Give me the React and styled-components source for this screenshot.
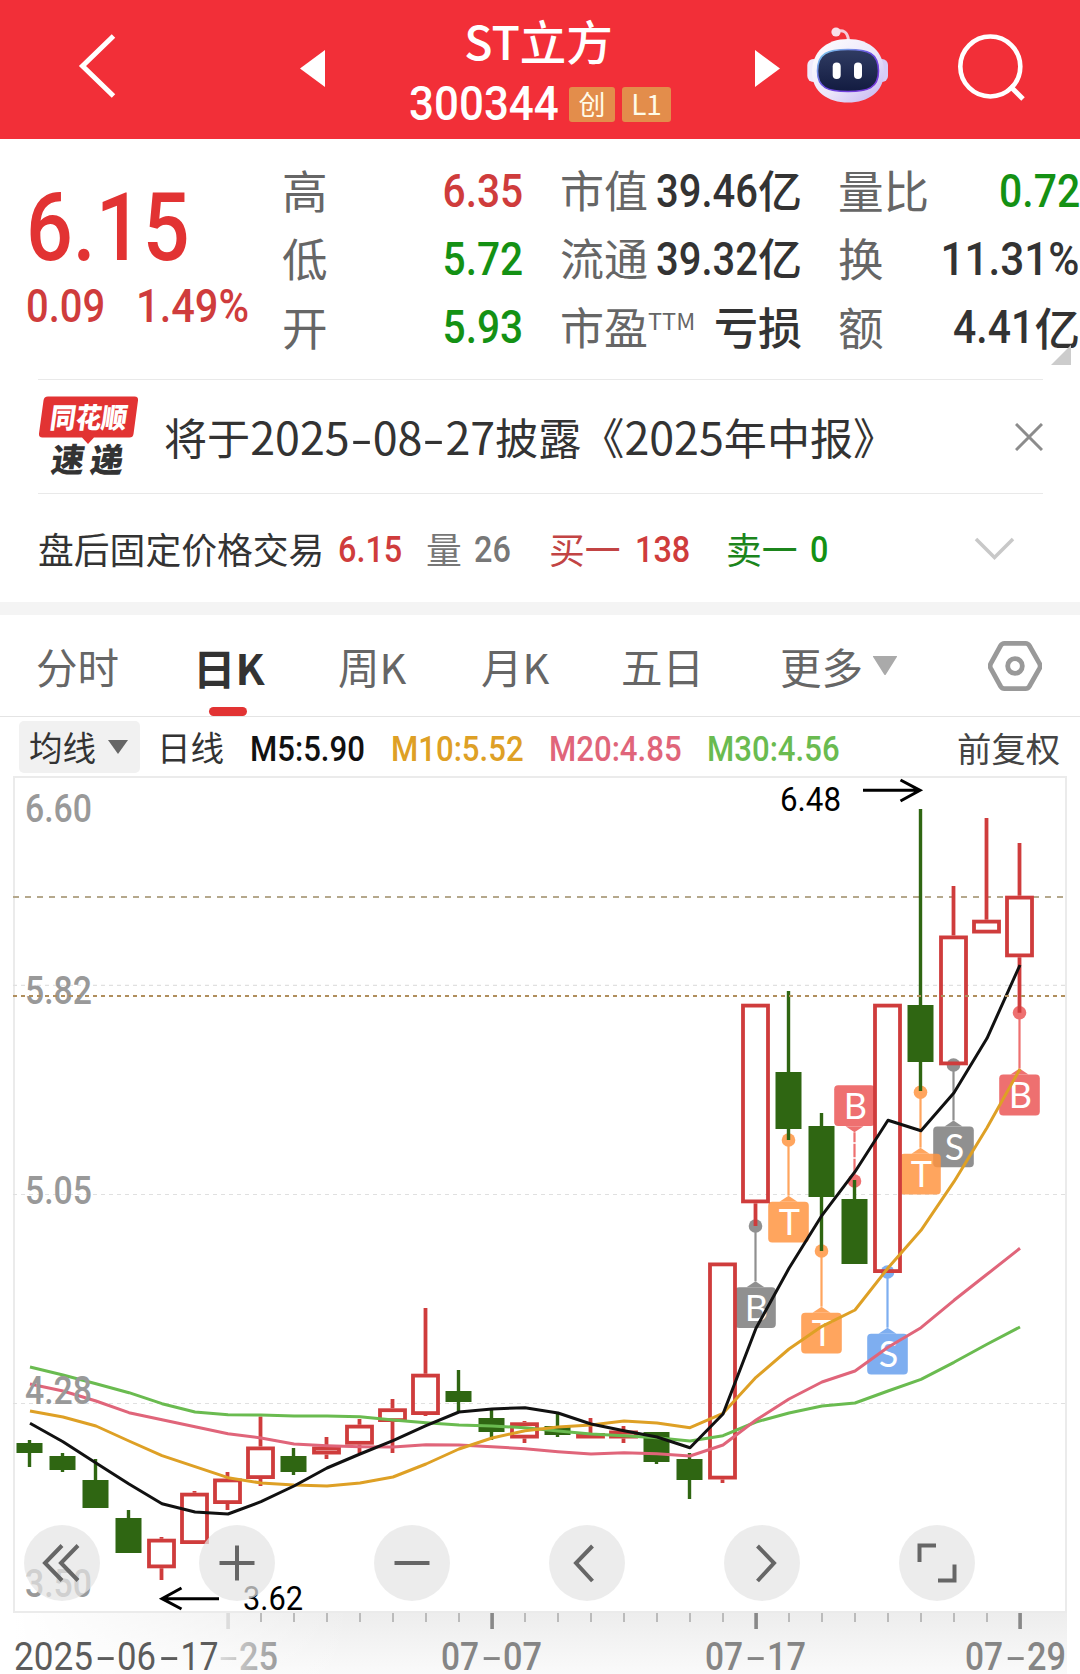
import React from "react"
import styled, { createGlobalStyle } from "styled-components"

const GlobalStyle = createGlobalStyle`
  * {
    box-sizing: border-box;
  }
  body {
    margin: 0;
    background: #fff;
    font-family: "Noto Sans CJK SC", sans-serif;
    color: #333;
  }
  svg {
    display: block;
    flex: none;
  }
`

const Page = styled.div`
  width: 1080px;
  height: 1674px;
  overflow: hidden;
  background: #fff;
`

// narrow figures, pinned to one side of a cell of fixed width
const Num = styled.span`
  display: inline-block;
  width: ${p => p.$w ? `${p.$w}px` : 'auto'};
  margin-left: ${p => p.$pull ? `-${p.$pull}px` : 0};
  font-family: Roboto, "Noto Sans CJK SC", sans-serif;
  font-size: ${p => p.$size || 47}px;
  font-weight: ${p => p.$weight || 500};
  line-height: 1;
  color: ${p => p.$color || 'inherit'};
  white-space: nowrap;
  transform: scaleX(${p => p.$scale || 0.9});
  transform-origin: ${p => p.$right ? 'right' : 'left'} center;
`

const Header = styled.header`
  display: grid;
  grid-template-columns: 196px 63px 106px 350px 92px 81px 192px;
  height: 139px;
  background: #f22f38;
  color: #fff;
`

const Slot = styled.div`
  padding: ${p => p.$top}px 0 0 ${p => p.$left}px;
`

const TitleBox = styled.div`
  display: flex;
  flex-direction: column;
  align-items: center;
`

const StockName = styled.div`
  margin: 9px 3px 0 0;
  height: 65px;
  font-size: 46.5px;
  font-weight: 500;
  line-height: 62px;
`

const CodeRow = styled.div`
  display: flex;
  align-items: center;
  height: 60px;
  gap: 7px;
`

const Badge = styled.span`
  width: ${p => p.$w}px;
  height: 35px;
  border-radius: 3px;
  background: #e38d4b;
  color: #fffbe8;
  font-size: ${p => p.$size || 27}px;
  line-height: 33px;
  text-align: center;
`

const Quote = styled.section`
  position: relative;
  display: grid;
  grid-template-columns: 256px 278px 278px 1fr;
  height: 240px;
  padding: 17px 0 0 26px;
`

const PriceCol = styled.div`
  padding-top: 24px;
  color: #e23333;
`

const ChangeRow = styled.div`
  display: flex;
  margin-top: 7px;
  color: #cf3c3c;
`

const QuoteCol = styled.div`
  display: flex;
  flex-direction: column;
  padding-right: ${p => p.$gap || 0}px;
`

const QuoteRow = styled.div`
  display: flex;
  justify-content: space-between;
  align-items: center;
  height: 68.3px;
  font-size: ${p => p.$size || 45.6}px;
  line-height: 64px;
  white-space: nowrap;
`

const QuoteLabel = styled.span`
  padding-bottom: 2px;
  color: #666;
`

const QuoteValue = styled.span`
  display: flex;
  align-items: center;
  color: ${p => p.$color || '#333'};
`

const Unit = styled.span`
  padding-bottom: 2px;
  font-weight: 500;
`

const Ttm = styled.sup`
  display: inline-block;
  font-size: 23.5px;
  line-height: 1;
  vertical-align: 15px;
`

const Corner = styled.i`
  position: absolute;
  right: 9px;
  top: 206px;
  border-left: 20px solid transparent;
  border-bottom: 20px solid #ccc;
`

const NewsRow = styled.section`
  display: flex;
  align-items: center;
  height: 115px;
  margin: 0 37px 0 38px;
  border-top: 1px solid #e9e9e9;
  border-bottom: 1px solid #e9e9e9;
`

const NewsText = styled.div`
  flex: 1;
  margin: 0 0 1px 23px;
  font-size: 43.1px;
  line-height: 60px;
  white-space: nowrap;
`

const NewsNum = styled.span`
  font-size: 44.8px;
`

const Dash = styled.span`
  display: inline-block;
  width: 23px;
  text-align: center;
  transform: scaleX(1.45);
`

const AfterHours = styled.section`
  display: grid;
  grid-template-columns: 300px 88px 48px 75px 86px 91px 84px 164px 1fr;
  align-items: center;
  height: 108px;
  padding: 3px 38px 0;
  font-size: 35.8px;
  line-height: 50px;
  white-space: nowrap;
`

const Tone = styled.span`
  padding-bottom: 4px;
  color: ${p => p.$color};
`

const Band = styled.div`
  height: 13px;
  background: #f4f4f4;
`

const Tabs = styled.nav`
  display: grid;
  grid-template-columns: 157px 145px 143px 140px 159px 208px 1fr;
  height: 102px;
  padding-left: 36px;
  border-bottom: 1px solid #e4e4e4;
`

const Tab = styled.div`
  position: relative;
  display: flex;
  align-items: center;
  height: 101px;
  padding-top: 1px;
  font-size: ${p => p.$active ? 42.5 : 41.5}px;
  font-weight: ${p => p.$active ? 700 : 400};
  color: ${p => p.$active ? '#333' : '#666'};
  white-space: nowrap;

  &::after {
    content: '';
    display: ${p => p.$active ? 'block' : 'none'};
    position: absolute;
    left: 16px;
    bottom: 0;
    width: 38px;
    height: 9px;
    border-radius: 5px;
    background: #e23333;
  }
`

const MaRow = styled.div`
  display: grid;
  grid-template-columns: 121px 17px 93px 141px 158px 158px 250px 1fr;
  align-items: center;
  height: 59px;
  padding-left: 19px;
  font-size: 33.6px;
  line-height: 48px;
  white-space: nowrap;

  & > ${Num} {
    padding-top: 5px;
  }
`

const MaButton = styled.div`
  display: flex;
  align-items: center;
  gap: 11px;
  height: 52px;
  padding-left: 10px;
  border-radius: 5px;
  background: #f1f1f1;
`

const Adjust = styled.span`
  font-size: 34.4px;
  color: #444;
`

const ChartArea = styled.section`
  position: relative;
  height: 898px;
`

const Controls = styled.div`
  position: absolute;
  left: 24px;
  top: 749px;
  display: flex;
  gap: 99px;
`

const RoundButton = styled.button`
  display: flex;
  align-items: center;
  justify-content: center;
  width: 76px;
  height: 76px;
  padding: 0;
  border: 0;
  border-radius: 50%;
  background: rgba(229, 229, 229, 0.72);
`

const RED = '#cf3c3c'
const GREEN = '#149114'

const highLow = [
  { label: '高', value: '6.35', color: RED },
  { label: '低', value: '5.72', color: GREEN },
  { label: '开', value: '5.93', color: GREEN },
]

const caps = [
  { label: '市值', value: '39.46', unit: '亿' },
  { label: '流通', value: '39.32', unit: '亿' },
  { label: '市盈', ttm: true, unit: '亏损' },
]

const ratios = [
  { label: '量比', value: '0.72', color: GREEN, scale: 0.87 },
  { label: '换', value: '11.31%', scale: 0.9 },
  { label: '额', value: '4.41', unit: '亿', scale: 0.87 },
]

// [up, high, top, bottom, low]
const candles = [
  [0, 1440, 1443, 1453, 1467],
  [0, 1453, 1456, 1470, 1472],
  [0, 1459, 1480, 1508, 1508],
  [0, 1510, 1518, 1553, 1553],
  [1, 1537, 1538.7, 1568.3, 1580],
  [1, 1491, 1492.7, 1544, 1544],
  [1, 1472, 1478.5, 1504, 1510],
  [1, 1416.5, 1446.5, 1479, 1486],
  [0, 1448, 1456, 1472, 1475],
  [1, 1437, 1446.5, 1454.5, 1459],
  [1, 1419, 1424.7, 1444.7, 1453],
  [1, 1399, 1408.3, 1422, 1453],
  [1, 1308, 1373.7, 1415, 1416],
  [0, 1370, 1391, 1402, 1412],
  [0, 1409, 1418, 1432, 1440],
  [1, 1421, 1422.3, 1438.5, 1443],
  [0, 1413, 1426, 1435, 1437],
  [1, 1418, 1433, 1438.5, 1438.5],
  [1, 1426, 1430.5, 1438.5, 1443],
  [0, 1432, 1432, 1462, 1464],
  [0, 1453, 1459, 1480, 1499],
  [1, 1262.5, 1262.5, 1479.5, 1483],
  [1, 1003.7, 1003.7, 1203.3, 1226],
  [0, 991, 1072, 1129, 1140],
  [0, 1113, 1126, 1197, 1251],
  [0, 1180, 1199, 1264, 1264],
  [1, 1003.7, 1003.7, 1273, 1273],
  [0, 809, 1005, 1062, 1091],
  [1, 886, 935.5, 1065.3, 1065.3],
  [1, 818, 919.7, 933.5, 933.5],
  [1, 843, 895.7, 957.3, 1012.7],
]

const averages = [
  {
    color: '#6abb50',
    points: [1367, 1375, 1383.7, 1392.7, 1403.7, 1412, 1414.7, 1415, 1416, 1416, 1416.7, 1420, 1422.7, 1425, 1426, 1427.7, 1431, 1434, 1435.7, 1437.7, 1441, 1435.7, 1422, 1413, 1406, 1403, 1391, 1379.3, 1362.3, 1344.3, 1327],
  },
  {
    color: '#e0657a',
    points: [1384, 1391, 1401, 1412.7, 1419.7, 1426.7, 1433.7, 1438, 1444, 1445.7, 1446.7, 1447, 1444.7, 1445, 1446.7, 1448.7, 1451.7, 1454, 1452.7, 1453.7, 1456, 1445, 1420, 1399, 1382, 1371, 1347.3, 1327.7, 1300.3, 1274.3, 1248.3],
  },
  {
    color: '#dea025',
    points: [1411, 1417, 1426, 1441, 1455.7, 1466.7, 1477.7, 1483, 1485, 1486, 1483, 1477, 1464, 1449, 1438, 1430.7, 1427, 1425, 1421, 1423, 1427.7, 1413.3, 1377.3, 1349, 1326.3, 1310, 1268, 1230.3, 1181.7, 1127.7, 1069],
  },
  {
    color: '#111',
    points: [1423.3, 1441.7, 1463, 1484, 1503.7, 1512, 1514, 1501.7, 1486, 1468, 1454, 1440.7, 1425.7, 1412, 1409, 1407.7, 1413, 1424, 1430.7, 1437, 1447.7, 1414, 1328.3, 1268.3, 1215.3, 1171.7, 1120.3, 1130.7, 1092.7, 1038.3, 965],
  },
]

// dot: where the pin starts, box: top edge of the square
const markers = [
  { i: 22, text: 'B', color: '#7c7c7c', dot: 1226, box: 1287.3 },
  { i: 23, text: 'T', color: '#ff9440', dot: 1140, box: 1201.7 },
  { i: 24, text: 'T', color: '#ff9440', dot: 1251, box: 1312.7 },
  { i: 25, text: 'B', color: '#eb5555', dot: 1181, box: 1085.3, above: true },
  { i: 26, text: 'S', color: '#669fee', dot: 1272, box: 1333.7 },
  { i: 28, text: 'S', color: '#7c7c7c', dot: 1065, box: 1126.5 },
  { i: 27, text: 'T', color: '#ff9440', dot: 1092.3, box: 1153.7 },
  { i: 30, text: 'B', color: '#eb5555', dot: 1012.7, box: 1074.6 },
]

const priceLabels = [
  { text: '6.60', y: 821.5 },
  { text: '5.82', y: 1004 },
  { text: '5.05', y: 1204 },
  { text: '4.28', y: 1404 },
  { text: '3.50', y: 1597 },
]

const dates = [
  { text: '07-07', x: 442 },
  { text: '07-17', x: 706 },
  { text: '07-29', x: 966 },
]

const xOf = i => 29.5 + 33 * i

function Candle({ x, data }) {
  const [up, high, top, bottom, low] = data
  if (!up) {
    return (
      <g fill="#2f6612">
        <rect x={x - 1.7} y={high} width={3.4} height={low - high} />
        <rect x={x - 13} y={top} width={26} height={bottom - top} />
      </g>
    )
  }
  return (
    <g stroke={RED} strokeWidth={3.8} fill="none">
      <path d={`M${x} ${high}V${top}M${x} ${bottom}V${low}`} />
      <rect x={x - 12.5} y={top + 1.9} width={25} height={Math.max(bottom - top - 3.8, 1)} />
    </g>
  )
}

function Marker({ i, text, color, dot, box, above }) {
  const x = xOf(i)
  const edge = above ? box + 41 : box
  const tip = above ? edge + 6 : edge - 6
  return (
    <g>
      <g fill={color} opacity={0.84}>
        <circle cx={x} cy={dot} r={6.8} />
        <rect x={x - 1.1} y={Math.min(dot, tip)} width={2.2} height={Math.abs(tip - dot)} />
        <path d={`M${x - 9} ${edge}L${x} ${tip}L${x + 9} ${edge}Z`} />
        <rect x={x - 20.3} y={box} width={40.6} height={40.8} rx={4} />
      </g>
      {above ? <path d={`M${x - 2} 1143h4M${x - 2} 1158h4`} stroke="#fff" strokeWidth={1.5} /> : null}
      <text
        x={x + 1}
        y={box + 33.5}
        textAnchor="middle"
        fill="#fff"
        fontFamily="Lato, sans-serif"
        fontSize={36}
      >
        {text}
      </text>
    </g>
  )
}

function ChartText({ children, x, y, w, size = 38, fill = '#999', weight = 500 }) {
  return (
    <text
      x={x}
      y={y}
      textLength={w}
      lengthAdjust="spacingAndGlyphs"
      fontFamily="Roboto, sans-serif"
      fontSize={size}
      fontWeight={weight}
      fill={fill}
    >
      {children}
    </text>
  )
}

// groups of figures with long dashes between them
function DateText({ parts, x, fill, weight, y = 1669.5 }) {
  return (
    <g>
      {parts.map((p, i) => (
        <g key={i}>
          {i > 0 ? <ChartText x={x + p.at - 20.5} y={y} w={18.5} fill={fill} weight={400}>-</ChartText> : null}
          <ChartText x={x + p.at} y={y} w={p.w} fill={fill} weight={weight}>{p.text}</ChartText>
        </g>
      ))}
    </g>
  )
}

function KLineChart() {
  return (
    <svg width="1080" height="898" viewBox="0 776 1080 898">
      <defs>
        <linearGradient id="axis" x1="0" y1="0" x2="0" y2="1">
          <stop offset="0" stopColor="#ededed" />
          <stop offset="1" stopColor="#fafafa" />
        </linearGradient>
        <linearGradient id="fade" x1="0" y1="0" x2="1" y2="0">
          <stop offset="0" stopColor="#fff" />
          <stop offset="1" stopColor="#fff" stopOpacity="0" />
        </linearGradient>
        <linearGradient id="dateFade" gradientUnits="userSpaceOnUse" x1="218" y1="0" x2="280" y2="0">
          <stop offset="0" stopColor="#dcdcdc" />
          <stop offset="1" stopColor="#999" />
        </linearGradient>
      </defs>

      <rect x="13" y="1613" width="1054" height="61" fill="url(#axis)" />
      <rect x="13" y="1613" width="340" height="61" fill="url(#fade)" />
      <rect x="14" y="777" width="1052" height="835" fill="none" stroke="#ebebeb" strokeWidth="2" />

      <path
        d="M13 985.3H1065M13 1194.5H1065M13 1403.5H1065"
        stroke="#e0e0e0"
        strokeWidth="1.2"
        strokeDasharray="4 4"
      />
      <path d="M13 897H1066" stroke="#b5a88c" strokeWidth="2" strokeDasharray="6 6" />

      {markers.map(m => <Marker key={m.i} {...m} />)}
      {candles.map((c, i) => <Candle key={i} x={xOf(i)} data={c} />)}

      {averages.map(a => (
        <polyline
          key={a.color}
          points={a.points.map((y, i) => `${xOf(i) + 0.5},${y}`).join(' ')}
          fill="none"
          stroke={a.color}
          strokeWidth="3"
          strokeLinejoin="round"
        />
      ))}

      {priceLabels.map(p => (
        <ChartText key={p.text} x={25} y={p.y} w={67}>{p.text}</ChartText>
      ))}
      <path d="M13 996H1066" stroke="#b08e5c" strokeWidth="2" strokeDasharray="4 4" />

      <ChartText x={780} y={810.5} w={61} size={33} fill="#000" weight={400}>6.48</ChartText>
      <ChartText x={243} y={1610} w={60} size={33} fill="#000" weight={400}>3.62</ChartText>
      <g fill="none" stroke="#000" strokeWidth="3">
        <path d="M863 790.3H920M900.5 780L920 790.3L900.5 801" />
        <path d="M219 1598.7H162M181.5 1588L162 1598.7L181.5 1609" />
      </g>

      {candles.map((c, i) => {
        if (i < 6) return null
        const major = i === 6 || i === 14 || i === 22 || i === 30
        const color = i === 6 ? '#dcdcdc' : major ? '#888' : '#bbb'
        return (
          <rect
            key={i}
            x={xOf(i) - (major ? 1.2 : 0.5)}
            y={1613}
            width={major ? 3.6 : 2}
            height={major ? 16 : 9}
            fill={color}
          />
        )
      })}

      <DateText
        x={14}
        fill="#5c5c5c"
        weight={400}
        parts={[{ text: '2025', at: 0, w: 79 }, { text: '06', at: 103, w: 39 }, { text: '17', at: 166.5, w: 38 }]}
      />
      <ChartText x={219.5} y={1669.5} w={18} fill="url(#dateFade)" weight={400}>-</ChartText>
      <ChartText x={239} y={1669.5} w={39} fill="url(#dateFade)">25</ChartText>
      {dates.map(d => (
        <DateText
          key={d.text}
          x={d.x - 1}
          fill="#858585"
          parts={[{ text: d.text.slice(0, 2), at: 0, w: 38 }, { text: d.text.slice(3), at: 62, w: 39 }]}
        />
      ))}
    </svg>
  )
}

function ControlIcon({ d }) {
  return (
    <svg width="76" height="76" viewBox="0 0 76 76" fill="none" stroke="#666" strokeWidth="4">
      <path d={d} />
    </svg>
  )
}

const controls = [
  'M38 20.5L21 38L38 55.5M54 20.5L37 38L54 55.5',
  'M20.5 38H55.5M38 20.5V55.5',
  'M20.5 38H55.5',
  'M43.5 21L27 38L43.5 56',
  'M33.5 21L50 38L33.5 56',
  'M20.5 37V20.5H37M55.5 39.5V55.5H39',
]

function Robot() {
  return (
    <svg width="82" height="80" viewBox="17 10 82 80">
      <defs>
        <linearGradient id="shell" x1="0" y1="0" x2="1" y2="1">
          <stop offset="0" stopColor="#fff" />
          <stop offset="0.55" stopColor="#ece6fa" />
          <stop offset="1" stopColor="#c2b2f0" />
        </linearGradient>
        <linearGradient id="rim" x1="0" y1="0" x2="1" y2="1">
          <stop offset="0" stopColor="#7fd9ee" />
          <stop offset="0.5" stopColor="#6a4ae0" />
          <stop offset="1" stopColor="#7a35d8" />
        </linearGradient>
        <linearGradient id="visor" x1="0" y1="0" x2="0" y2="1">
          <stop offset="0" stopColor="#303c63" />
          <stop offset="1" stopColor="#121b40" />
        </linearGradient>
      </defs>
      <path d="M46 16.5Q57 13 58.5 25" fill="none" stroke="#f6c9d8" strokeWidth="3" />
      <circle cx="46" cy="17" r="4.6" fill="#f8dfea" />
      <rect x="17.3" y="44" width="12" height="23" rx="6" fill="#efeafc" />
      <rect x="86" y="44" width="12" height="23" rx="6" fill="#d7ccf6" />
      <path
        d="M58 24C80 24 94 37 94 57C94 77 78 87.5 58 87.5C38 87.5 22 77 22 57C22 37 36 24 58 24Z"
        fill="url(#shell)"
      />
      <path
        d="M58 34.5C78 34.5 88.5 38 88.5 56C88.5 73 78 76.5 58 76.5C38 76.5 27.5 73 27.5 56C27.5 38 38 34.5 58 34.5Z"
        fill="url(#visor)"
        stroke="url(#rim)"
        strokeWidth="1.6"
      />
      <rect x="42.7" y="47.5" width="8" height="16.5" rx="4" fill="#fff" />
      <rect x="64" y="47.5" width="8" height="16.5" rx="4" fill="#fff" />
    </svg>
  )
}

function NewsLogo() {
  return (
    <svg width="103" height="84" viewBox="38 394 103 84">
      <path
        d="M48 395.5H134.5Q138.5 395.5 138 399.5L133.5 433Q133 436.5 129.5 436.5H94L88 443L82 436.5H42.5Q38.5 436.5 39 432.5L43.5 399.5Q44 395.5 48 395.5Z"
        fill="#e23333"
      />
      <g fontFamily="'Noto Sans CJK SC', sans-serif" fontWeight="900">
        <text
          transform="translate(49 426.5) skewX(-8)"
          fontSize="28"
          textLength="77"
          lengthAdjust="spacingAndGlyphs"
          fill="#fff"
        >
          同花顺
        </text>
        <text transform="translate(50 471) skewX(-8)" fontSize="33" fill="#333">速</text>
        <text transform="translate(89 471) skewX(-8)" fontSize="33" fill="#333">递</text>
      </g>
    </svg>
  )
}

export default function App() {
  return (
    <Page>
      <GlobalStyle />
      <Header>
        <Slot $top={33} $left={78}>
          <svg width="40" height="68" viewBox="0 0 40 68" fill="none" stroke="#fff" strokeWidth="5">
            <path d="M35.5 3L4.5 33L35.5 63" />
          </svg>
        </Slot>
        <div />
        <Slot $top={50} $left={41}>
          <svg width="25" height="37" viewBox="0 0 25 37"><path d="M25 0V37L0 18.5Z" fill="#fff" /></svg>
        </Slot>
        <TitleBox>
          <StockName>ST立方</StockName>
          <CodeRow>
            <Num $size={48} $w={153} $scale={0.915}>300344</Num>
            <Badge $w={46}>创</Badge>
            <Badge $w={49} $size={28}>L1</Badge>
          </CodeRow>
        </TitleBox>
        <Slot $top={50} $left={40}>
          <svg width="25" height="37" viewBox="0 0 25 37"><path d="M0 0V37L25 18.5Z" fill="#fff" /></svg>
        </Slot>
        <Slot $top={25} $left={0}>
          <Robot />
        </Slot>
        <Slot $top={32} $left={68}>
          <svg width="72" height="72" viewBox="0 0 72 72" fill="none" stroke="#fff" strokeWidth="4.6">
            <circle cx="34.3" cy="34.5" r="30" />
            <path d="M54 54L67 67" strokeWidth="5" />
          </svg>
        </Slot>
      </Header>

      <Quote>
        <PriceCol>
          <Num $size={95} $scale={0.868}>6.15</Num>
          <ChangeRow>
            <Num $size={47} $w={110} $scale={0.85}>0.09</Num>
            <Num $size={47} $scale={0.885}>1.49%</Num>
          </ChangeRow>
        </PriceCol>
        <QuoteCol $gap={37}>
          {highLow.map(el => (
            <QuoteRow key={el.label}>
              <QuoteLabel>{el.label}</QuoteLabel>
              <Num $right $scale={0.865} $color={el.color}>{el.value}</Num>
            </QuoteRow>
          ))}
        </QuoteCol>
        <QuoteCol $gap={36}>
          {caps.map(el => (
            <QuoteRow key={el.label} $size={44}>
              <QuoteLabel>{el.label}{el.ttm ? <Ttm>TTM</Ttm> : null}</QuoteLabel>
              <QuoteValue>
                {el.value ? <Num $right $pull={24} $scale={0.85}>{el.value}</Num> : null}
                <Unit>{el.unit}</Unit>
              </QuoteValue>
            </QuoteRow>
          ))}
        </QuoteCol>
        <QuoteCol>
          {ratios.map(el => (
            <QuoteRow key={el.label}>
              <QuoteLabel>{el.label}</QuoteLabel>
              <QuoteValue $color={el.color}>
                <Num $right $scale={el.scale}>{el.value}</Num>
                {el.unit ? <Unit>{el.unit}</Unit> : null}
              </QuoteValue>
            </QuoteRow>
          ))}
        </QuoteCol>
        <Corner />
      </Quote>

      <NewsRow>
        <NewsLogo />
        <NewsText>
          将于<NewsNum>2025<Dash>-</Dash>08<Dash>-</Dash>27</NewsNum>披露《<NewsNum>2025</NewsNum>年中报》
        </NewsText>
        <svg width="28" height="28" viewBox="0 0 28 28" stroke="#8c8c8c" strokeWidth="3">
          <path d="M1 1L27 27M27 1L1 27" />
        </svg>
      </NewsRow>

      <AfterHours>
        <Tone $color="#333">盘后固定价格交易</Tone>
        <Num $size={36} $color={RED}>6.15</Num>
        <Tone $color="#777">量</Tone>
        <Num $size={36} $color="#777">26</Num>
        <Tone $color="#c24444">买一</Tone>
        <Num $size={36} $color={RED}>138</Num>
        <Tone $color="#1c851c">卖一</Tone>
        <Num $size={36} $color={GREEN}>0</Num>
        <svg width="42" height="26" viewBox="0 0 42 26" fill="none" stroke="#c8c8c8" strokeWidth="3.5">
          <path d="M2 2L20.5 20.5L39 2" />
        </svg>
      </AfterHours>

      <Band />

      <Tabs>
        <Tab>分时</Tab>
        <Tab $active>日K</Tab>
        <Tab>周K</Tab>
        <Tab>月K</Tab>
        <Tab>五日</Tab>
        <Tab>
          更多
          <svg width="26" height="21" viewBox="0 0 26 21" style={{ marginLeft: 9 }}>
            <path d="M2 0.5H24L13 18Z" fill="#aaa" stroke="#aaa" strokeWidth="2" strokeLinejoin="round" />
          </svg>
        </Tab>
        <Tab>
          <svg width="54" height="52" viewBox="0 0 56 54" fill="none" stroke="#999" strokeWidth="5">
            <path d="M16 3.5H38Q40.5 3.5 42 6L52.5 24.5Q53.8 27 52.5 29.5L42 48Q40.5 50.5 38 50.5H16Q13.5 50.5 12 48L1.8 29.5Q0.5 27 1.8 24.5L12 6Q13.5 3.5 16 3.5Z" transform="translate(1 0)" />
            <circle cx="28" cy="27" r="7.6" />
          </svg>
        </Tab>
      </Tabs>

      <MaRow>
        <MaButton>
          均线
          <svg width="22" height="16" viewBox="0 0 22 16"><path d="M1 1H21L11 15Z" fill="#666" /></svg>
        </MaButton>
        <div />
        <span>日线</span>
        <Num $size={35} $scale={0.89} $color="#111">M5:5.90</Num>
        <Num $size={35} $scale={0.89} $color="#dea025">M10:5.52</Num>
        <Num $size={35} $scale={0.89} $color="#e0657a">M20:4.85</Num>
        <Num $size={35} $scale={0.89} $color="#6abb50">M30:4.56</Num>
        <Adjust>前复权</Adjust>
      </MaRow>

      <ChartArea>
        <KLineChart />
        <Controls>
          {controls.map(d => <RoundButton key={d}><ControlIcon d={d} /></RoundButton>)}
        </Controls>
      </ChartArea>
    </Page>
  )
}
